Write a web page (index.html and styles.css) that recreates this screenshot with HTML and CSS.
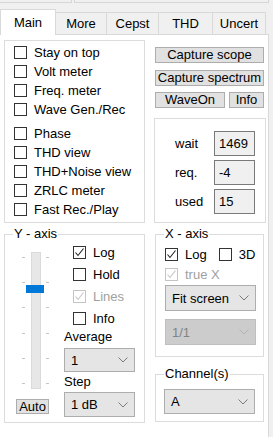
FILE: index.html
```html
<!DOCTYPE html>
<html lang="en">
<head>
  <meta charset="UTF-8">
  <meta name="viewport" content="width=device-width, initial-scale=1.0">
  <title>Main</title>
  <link rel="stylesheet" href="styles.css">
</head>
<body>

  <div class="top-strip">
    <div class="strip-box first"></div>
    <div class="strip-box second"></div>
  </div>

  <div class="tabs">
    <div class="tab active w-main">Main</div>
    <div class="tab w-more">More</div>
    <div class="tab w-cepst">Cepst</div>
    <div class="tab w-thd">THD</div>
    <div class="tab w-uncert">Uncert</div>
  </div>

  <section class="panel">

    <div class="box options">
      <label class="check"><span class="cb"></span>Stay on top</label>
      <label class="check"><span class="cb"></span>Volt meter</label>
      <label class="check"><span class="cb"></span>Freq. meter</label>
      <label class="check"><span class="cb"></span>Wave Gen./Rec</label>
      <label class="check gap"><span class="cb"></span>Phase</label>
      <label class="check"><span class="cb"></span>THD view</label>
      <label class="check"><span class="cb"></span>THD+Noise view</label>
      <label class="check"><span class="cb"></span>ZRLC meter</label>
      <label class="check"><span class="cb"></span>Fast Rec./Play</label>
    </div>

    <div class="side">
      <button class="btn wide first-btn">Capture scope</button>
      <button class="btn wide second-btn">Capture spectrum</button>
      <div class="btn-row">
        <button class="btn wave">WaveOn</button>
        <button class="btn info">Info</button>
      </div>
      <div class="box timing">
        <div class="field"><span class="field-label">wait</span><span class="readout">1469</span></div>
        <div class="field"><span class="field-label">req.</span><span class="readout">-4</span></div>
        <div class="field"><span class="field-label">used</span><span class="readout">15</span></div>
      </div>
    </div>

    <fieldset class="group yaxis">
      <legend>Y - axis</legend>
      <div class="yaxis-body">
        <div class="slider-col">
          <div class="slider">
            <div class="ticks">
              <span></span><span></span><span></span><span></span><span></span><span></span>
            </div>
            <div class="track"></div>
            <div class="ticks">
              <span></span><span></span><span></span><span></span><span></span><span></span>
            </div>
            <div class="thumb"></div>
          </div>
          <button class="btn auto">Auto</button>
        </div>
        <div class="controls">
          <label class="check opt"><span class="cb checked"><svg width="11" height="11" viewBox="0 0 11 11"><path d="M1.5 5.5 L4 8.5 L9.5 1.5" fill="none" stroke="#222" stroke-width="1.1"/></svg></span>Log</label>
          <label class="check opt"><span class="cb"></span>Hold</label>
          <label class="check opt disabled"><span class="cb checked"><svg width="11" height="11" viewBox="0 0 11 11"><path d="M1.5 5.5 L4 8.5 L9.5 1.5" fill="none" stroke="#c4c4c4" stroke-width="1.1"/></svg></span>Lines</label>
          <label class="check opt"><span class="cb"></span>Info</label>
          <div class="caption">Average</div>
          <div class="select avg">1<svg class="chev" width="10" height="6" viewBox="0 0 10 6"><path d="M0.5 0.5 L5 5 L9.5 0.5" fill="none" stroke="#7a7a7a"/></svg></div>
          <div class="caption step-cap">Step</div>
          <div class="select step">1 dB<svg class="chev" width="10" height="6" viewBox="0 0 10 6"><path d="M0.5 0.5 L5 5 L9.5 0.5" fill="none" stroke="#7a7a7a"/></svg></div>
        </div>
      </div>
    </fieldset>

    <div class="side">
      <fieldset class="group xaxis">
        <legend>X - axis</legend>
        <div class="xaxis-body">
          <div class="check-row">
            <label class="check"><span class="cb checked"><svg width="11" height="11" viewBox="0 0 11 11"><path d="M1.5 5.5 L4 8.5 L9.5 1.5" fill="none" stroke="#222" stroke-width="1.1"/></svg></span>Log</label>
            <label class="check three-d"><span class="cb"></span>3D</label>
          </div>
          <label class="check disabled"><span class="cb checked"><svg width="11" height="11" viewBox="0 0 11 11"><path d="M1.5 5.5 L4 8.5 L9.5 1.5" fill="none" stroke="#c4c4c4" stroke-width="1.1"/></svg></span>true X</label>
          <div class="select fit">Fit screen<svg class="chev" width="10" height="6" viewBox="0 0 10 6"><path d="M0.5 0.5 L5 5 L9.5 0.5" fill="none" stroke="#7a7a7a"/></svg></div>
          <div class="select ratio off">1/1<svg class="chev" width="10" height="6" viewBox="0 0 10 6"><path d="M0.5 0.5 L5 5 L9.5 0.5" fill="none" stroke="#b4b4b4"/></svg></div>
        </div>
      </fieldset>

      <fieldset class="group channels">
        <legend>Channel(s)</legend>
        <div class="select chan">A<svg class="chev" width="10" height="6" viewBox="0 0 10 6"><path d="M0.5 0.5 L5 5 L9.5 0.5" fill="none" stroke="#7a7a7a"/></svg></div>
      </fieldset>
    </div>

  </section>

</body>
</html>
```

FILE: styles.css
```css
* {
  box-sizing: border-box;
}
body {
  margin: 0;
  background: #f0f0f0;
  font-family: "Liberation Sans", Arial, sans-serif;
  font-size: 13px;
  color: #000;
  overflow: hidden;
}

/* strip of cut-off controls above the tabs */
.top-strip {
  display: flex;
  height: 3px;
}
.strip-box {
  border: 1px solid #d6d6d6;
  border-top: none;
}
.strip-box.first {
  width: 73px;
  margin-left: -1px;
}
.strip-box.second {
  width: 195px;
  margin-left: 2px;
}

/* tabs */
.tabs {
  display: flex;
  align-items: flex-end;
  height: 25px;
  margin-top: 6px;
}
.tab {
  height: 22px;
  display: flex;
  align-items: center;
  justify-content: center;
  border: 1px solid #d9d9d9;
  border-bottom: none;
  background: #f0f0f0;
  margin-left: -1px;
}
.tab:first-child {
  margin-left: 0;
}
.tab.active {
  height: 26px;
  margin-bottom: -1px;
  background: #fff;
  position: relative;
  z-index: 1;
  padding-bottom: 1px;
}
.w-main { width: 56px; }
.w-more { width: 52px; }
.w-cepst { width: 53px; }
.w-thd { width: 55px; }
.w-uncert { width: 54px; }

/* page panel */
.panel {
  width: 269px;
  min-height: 420px;
  background: #fff;
  border-top: 1px solid #d9d9d9;
  border-right: 1px solid #d9d9d9;
  padding: 5px 0 0 4px;
  display: grid;
  grid-template-columns: 141px 112px;
  grid-template-rows: 183px auto;
  column-gap: 9px;
  align-content: start;
}
.box {
  border: 1px solid #dcdcdc;
}

/* checkboxes */
.check {
  display: flex;
  align-items: center;
  height: 19px;
  white-space: nowrap;
}
.cb {
  width: 13px;
  height: 13px;
  border: 1px solid #333;
  background: #fff;
  margin-right: 7px;
  display: flex;
  align-items: center;
  justify-content: center;
  flex: none;
}
.disabled {
  color: #a0a0a0;
}
.disabled .cb {
  border-color: #c4c4c4;
}

.options {
  padding: 2px 0 0 9px;
}
.options .check.gap {
  margin-top: 5px;
}

/* right column, top */
.side {
  display: flex;
  flex-direction: column;
}
.btn {
  font-family: inherit;
  font-size: 13px;
  color: #000;
  background: #e1e1e1;
  border: 1px solid #adadad;
  border-radius: 0;
  padding: 0;
  height: 16px;
  line-height: 14px;
  margin: 0;
}
.btn.wide {
  margin: 0 2px 0 1px;
}
.first-btn {
  margin-top: 7px !important;
}
.second-btn {
  margin-top: 7px !important;
}
.btn-row {
  display: flex;
  gap: 4px;
  margin: 6px 2px 0 1px;
}
.btn.wave {
  width: 70px;
}
.btn.info {
  flex: 1;
}
.timing {
  margin-top: 10px;
  flex: 1;
  padding: 12px 0 0 20px;
  display: flex;
  flex-direction: column;
  gap: 4px;
}
.field {
  display: flex;
  align-items: center;
}
.field-label {
  width: 39px;
}
.readout {
  width: 41px;
  height: 25px;
  border: 1px solid #7a7a7a;
  background: #f0f0f0;
  padding-left: 4px;
  display: flex;
  align-items: center;
}

/* group boxes */
.group {
  margin: 4px 0 0;
  padding: 0;
  border: 1px solid #dcdcdc;
  min-width: 0;
}
.group legend {
  margin-left: 8px;
  padding: 0 1px;
  line-height: 14px;
}

/* Y axis */
.yaxis {
  height: 196px;
}
.yaxis-body {
  display: flex;
}
.slider-col {
  width: 58px;
  display: flex;
  flex-direction: column;
  padding: 11px 0 0 17px;
}
.slider {
  position: relative;
  display: flex;
  width: 27px;
  height: 137px;
}
.ticks {
  width: 3px;
  display: flex;
  flex-direction: column;
  justify-content: space-between;
  padding: 5px 0;
}
.ticks span {
  height: 1px;
  background: #c4c4c4;
}
.track {
  width: 10px;
  margin: 0 5px 0 6px;
  background: #e7e7e7;
  border: 1px solid #dadada;
}
.thumb {
  position: absolute;
  left: 4px;
  top: 33px;
  width: 18px;
  height: 8px;
  background: #0078d7;
}
.btn.auto {
  width: 33px;
  height: 15px;
  margin: 10px 0 0 -6px;
}
.controls {
  width: 71px;
  margin-left: 1px;
}
.check.opt {
  height: 22px;
  padding-left: 9px;
}
.caption {
  line-height: 16px;
}
.step-cap {
  margin-top: 2px;
}

/* drop-down look */
.select {
  display: flex;
  align-items: center;
  justify-content: space-between;
  height: 24px;
  padding: 0 6px 0 6px;
  background: #e5e5e5;
  border: 1px solid #adadad;
}
.select.avg {
  margin-top: 3px;
}
.select.step {
  margin-top: 2px;
  height: 25px;
}
.select.off {
  background: #cccccc;
  border-color: #bfbfbf;
  color: #838383;
}

/* X axis */
.xaxis {
  margin: 4px 2px 0 1px;
  height: 130px;
}
.xaxis-body {
  padding: 3px 0 0 9px;
}
.check-row {
  display: flex;
}
.three-d {
  margin-left: 12px;
}
.xaxis .check {
  height: 20px;
}
.select.fit {
  width: 91px;
  height: 26px;
  margin-top: 1px;
}
.select.ratio {
  width: 91px;
  height: 26px;
  margin-top: 8px;
}

.channels {
  margin: 10px 2px 0 1px;
  height: 55px;
}
.select.chan {
  width: 91px;
  height: 25px;
  margin: 8px 0 0 8px;
}
```
